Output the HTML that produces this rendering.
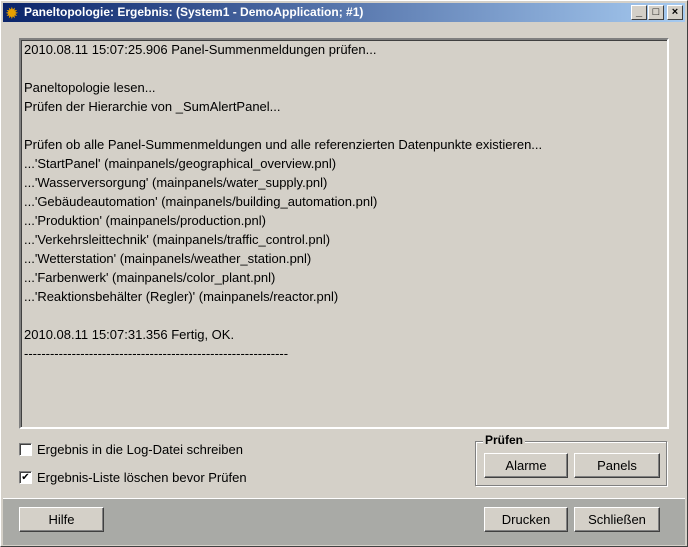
<html><head><style>
body{margin:0;width:688px;height:547px;background:#d4d0c8;font-family:"Liberation Sans",sans-serif;font-size:13px;position:relative;overflow:hidden}
.win{position:absolute;left:0;top:0;width:686px;height:545px;border:1px solid #fff;border-right-color:#404040;border-bottom-color:#404040}
.title{position:absolute;left:3px;top:3px;width:682px;height:19px;background:linear-gradient(90deg,#0a246a,#a6caf0);color:#fff;font-weight:bold;font-size:12px;line-height:19px}
.tb{position:absolute;top:2px;width:14px;height:13px;background:#d4d0c8;border:1px solid;border-color:#fff #404040 #404040 #fff;color:#000;font-size:11px;line-height:13px;text-align:center;font-weight:bold}
.box{position:absolute;left:19px;top:38px;width:646px;height:387px;border:2px solid;border-color:#808080 #fff #fff #808080;box-shadow:inset 1px 1px #404040}
.txt{position:absolute;left:24px;top:40px;line-height:19px;font-size:13px;white-space:pre;color:#000}
.btn{position:absolute;height:23px;border:1px solid;border-color:#fff #404040 #404040 #fff;box-shadow:inset -1px -1px #808080;background:#d4d0c8;text-align:center;line-height:23px;font-size:13px}
.cb{position:absolute;left:19px;width:11px;height:11px;background:#fff;border:1px solid;border-color:#808080 #fff #fff #808080;box-shadow:inset 1px 1px #404040;font-size:10px;line-height:11px;text-align:center}
.lbl{position:absolute;left:37px}
</style></head><body><div class="win"></div>
<div class="title"><span style="position:absolute;left:3px;top:1px;color:#e8a000;font-size:14px">✹</span><span style="position:absolute;left:21px">Paneltopologie: Ergebnis: (System1 - DemoApplication; #1)</span>
<div class="tb" style="left:628px">_</div><div class="tb" style="left:645px">□</div><div class="tb" style="left:664px">×</div></div>
<div class="box"></div>
<div class="txt">2010.08.11 15:07:25.906 Panel-Summenmeldungen prüfen...

Paneltopologie lesen...
Prüfen der Hierarchie von _SumAlertPanel...

Prüfen ob alle Panel-Summenmeldungen und alle referenzierten Datenpunkte existieren...
...'StartPanel' (mainpanels/geographical_overview.pnl)
...'Wasserversorgung' (mainpanels/water_supply.pnl)
...'Gebäudeautomation' (mainpanels/building_automation.pnl)
...'Produktion' (mainpanels/production.pnl)
...'Verkehrsleittechnik' (mainpanels/traffic_control.pnl)
...'Wetterstation' (mainpanels/weather_station.pnl)
...'Farbenwerk' (mainpanels/color_plant.pnl)
...'Reaktionsbehälter (Regler)' (mainpanels/reactor.pnl)

2010.08.11 15:07:31.356 Fertig, OK.
-------------------------------------------------------------</div>
<div class="cb" style="top:443px"></div><div class="lbl" style="top:442px">Ergebnis in die Log-Datei  schreiben</div>
<div class="cb" style="top:471px">✔</div><div class="lbl" style="top:470px">Ergebnis-Liste löschen bevor Prüfen</div>
<div style="position:absolute;left:475px;top:441px;width:190px;height:43px;border:1px solid #808080;box-shadow:1px 1px #fff,inset 1px 1px #fff"></div>
<div style="position:absolute;left:483px;top:433px;background:#d4d0c8;padding:0 2px;font-weight:bold;font-size:12px">Prüfen</div>
<div class="btn" style="left:484px;top:453px;width:82px">Alarme</div>
<div class="btn" style="left:574px;top:453px;width:84px">Panels</div>
<div style="position:absolute;left:3px;top:498px;width:682px;height:46px;background:#a9aaa6;border-top:1px solid #fff"></div>
<div class="btn" style="left:19px;top:507px;width:83px">Hilfe</div>
<div class="btn" style="left:484px;top:507px;width:82px">Drucken</div>
<div class="btn" style="left:574px;top:507px;width:84px">Schließen</div>
</body></html>
